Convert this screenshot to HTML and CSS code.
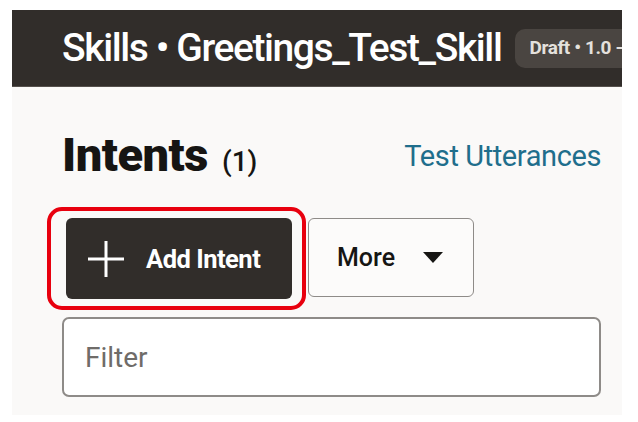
FILE: index.html
```html
<!DOCTYPE html>
<html lang="en">
<head>
<meta charset="utf-8">
<title>Intents</title>
<link rel="stylesheet" href="styles.css">
</head>
<body>
<div class="frame">
  <header class="topbar">
    <h1 class="title">Skills • Greetings_Test_Skill</h1>
    <span class="badge">Draft • 1.0 – Training</span>
  </header>
  <main class="panel">
    <div class="head-row">
      <h2 class="heading">Intents <span class="count">(1)</span></h2>
      <a class="link" href="#">Test Utterances</a>
    </div>
    <div class="toolbar">
      <span class="highlight">
        <button class="btn-primary" type="button">
          <svg class="plus" viewBox="0 0 36 36" width="36" height="36" aria-hidden="true">
            <path d="M18 0V36M0 18H36" stroke="#ffffff" stroke-width="3" fill="none"/>
          </svg>
          <span>Add Intent</span>
        </button>
      </span>
      <button class="btn-more" type="button">
        <span>More</span>
        <svg class="caret" viewBox="0 0 20 11" width="20" height="11" aria-hidden="true">
          <path d="M0 0H20L10 11Z" fill="#161513"/>
        </svg>
      </button>
    </div>
    <div class="filter">Filter</div>
  </main>
</div>
</body>
</html>
```
FILE: styles.css
```css
html, body {
  margin: 0;
  padding: 0;
  background: #ffffff;
}
body {
  font-family: Roboto, "Noto Sans", "Liberation Sans", sans-serif;
  color: #161513;
}
.frame {
  margin: 10px 0 0 12px;
  width: 610px;
}
.topbar {
  height: 76px;
  background: #312d2a;
  display: flex;
  align-items: center;
  padding-left: 50px;
  overflow: hidden;
  white-space: nowrap;
  border-bottom: 1px solid #55504c;
}
.title {
  margin: 0;
  color: #ffffff;
  font-size: 39px;
  font-weight: 500;
  letter-spacing: -1.4px;
  line-height: 1;
}
.badge {
  margin-left: 14px;
  background: #4a4541;
  color: #e4e1dd;
  font-size: 19px;
  font-weight: 700;
  letter-spacing: -0.4px;
  border-radius: 10px;
  padding: 9px 14px 10px;
  line-height: 20px;
}
.panel {
  background: #faf9f8;
  height: 328px;
  padding: 0 21px 0 50px;
  box-sizing: border-box;
  display: flex;
  flex-direction: column;
}
.head-row {
  display: flex;
  justify-content: space-between;
  align-items: baseline;
  margin-top: 38px;
  height: 60px;
}
.heading {
  margin: 0;
  font-size: 47px;
  font-weight: 900;
  letter-spacing: -0.5px;
  line-height: 60px;
}
.count {
  font-size: 28px;
  font-weight: 500;
  letter-spacing: 0;
  margin-left: 3px;
}
.link {
  color: #1f6e8c;
  text-decoration: none;
  font-size: 29px;
  font-weight: 400;
  letter-spacing: -0.4px;
  position: relative;
  top: -5px;
}
.toolbar {
  display: flex;
  align-items: stretch;
  margin-top: 33px;
  margin-left: 4px;
  height: 81px;
}
.highlight {
  position: relative;
  display: flex;
}
.highlight::after {
  content: "";
  position: absolute;
  top: -11px;
  bottom: -11px;
  left: -19px;
  right: -14px;
  border: 4px solid #e8000e;
  border-radius: 15px;
  pointer-events: none;
}
.btn-primary {
  width: 226px;
  height: 81px;
  background: #312d2a;
  color: #ffffff;
  border: none;
  border-radius: 6px;
  display: flex;
  align-items: center;
  padding: 0 0 0 22px;
  gap: 22px;
  font-family: inherit;
  font-size: 25.5px;
  font-weight: 700;
  letter-spacing: -0.5px;
  cursor: pointer;
}
.plus {
  flex: none;
}
.btn-more {
  margin-left: 16px;
  width: 166px;
  height: 79px;
  background: #fcfbfa;
  border: 1.5px solid #8e8b88;
  border-radius: 6px;
  display: flex;
  align-items: center;
  padding: 0 0 0 28px;
  gap: 28px;
  font-family: inherit;
  font-size: 25px;
  font-weight: 500;
  color: #161513;
  cursor: pointer;
}
.filter {
  margin-top: 18px;
  height: 80px;
  box-sizing: border-box;
  border: 2px solid #8e8b88;
  border-radius: 7px;
  background: #ffffff;
  display: flex;
  align-items: center;
  padding-left: 21px;
  font-size: 28px;
  color: #6f6c69;
}
```
